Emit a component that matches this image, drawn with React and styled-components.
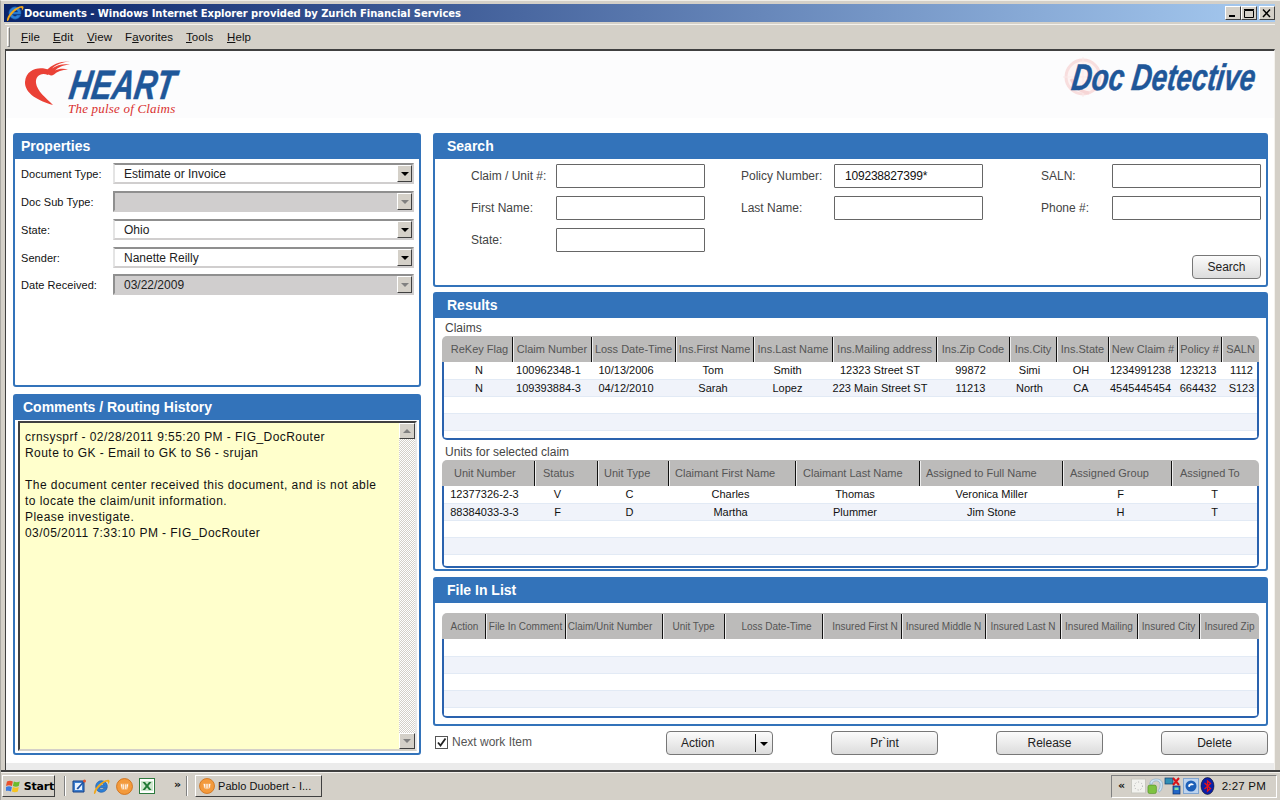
import React from "react";
import styled, { createGlobalStyle } from "styled-components";

const Global = createGlobalStyle`
  html, body { margin: 0; padding: 0; width: 1280px; height: 800px; overflow: hidden; }
  body { font-family: "Liberation Sans", Arial, sans-serif; background: #d4d0c8; }
  * { box-sizing: border-box; }
`;

const Win = styled.div`
  width: 1280px; height: 800px; display: flex; flex-direction: column; background: #d4d0c8;
  border-top: 1px solid #f0eee8; border-left: 1px solid #aaa8a2;
`;
const TitleBar = styled.div`
  height: 18px; flex: none; margin: 3px 5px 0 3px; display: flex; align-items: center; padding-left: 2px;
  background: linear-gradient(90deg, #0a246a 0%, #a6caf0 100%);
`;
const TitleText = styled.div`
  flex: 1; color: #fff; font: bold 10px "DejaVu Sans", sans-serif; letter-spacing: -.05px; white-space: nowrap;
`;
const WinButtons = styled.div`display: flex;`;
const WinBtn = styled.div`
  width: 16px; height: 14px; margin-left: ${p => p.$ml || 0}px; background: #d4d0c8;
  border: 1px solid; border-color: #fff #404040 #404040 #fff;
  display: flex; align-items: center; justify-content: center;
`;
const MenuBar = styled.div`
  height: 24px; flex: none; margin: 2px 5px 0 4px; display: flex; align-items: center; padding-left: 2px;
  border-top: 1px solid #f4f2ee; color: #111;
`;
const Grip = styled.div`width: 3px; height: 20px; border: 1px solid; border-color: #fff #808080 #808080 #fff; margin-right: 11px;`;
const MenuItem = styled.span`
  width: ${p => p.$w}px; font: 11.5px "Liberation Sans", sans-serif; letter-spacing: .1px;
  u { text-decoration: underline; }
`;
const Content = styled.div`
  height: 721px; flex: none; margin: 1px 5px 0 4px; display: flex; flex-direction: column; background: #fff;
  border-top: 2px solid #404040; border-left: 1px solid #404040; border-right: 1px solid #f4f2ee;
`;
const Brand = styled.div`
  height: 67px; flex: none; background: #fcfcfd; display: flex; justify-content: space-between; overflow: hidden;
`;
const HeartLogo = styled.div`
  display: flex; align-items: flex-start; padding: 9px 0 0 18px; position: relative;
`;
const HeartWords = styled.div`display: flex; flex-direction: column; margin-left: -2px;`;
const HeartName = styled.div`
  font: italic bold 41px/33px "Liberation Sans", sans-serif; color: #1f5799; margin-top: 9px;
  -webkit-text-stroke: .5px #1f5799;
  transform: scaleX(.75) skewX(-12deg); transform-origin: 0 50%; white-space: nowrap;
`;
const Tagline = styled.div`
  font: italic 13px/14px "Liberation Serif", serif; color: #d9302f; margin-left: -2px; margin-top: 0; letter-spacing: .2px; white-space: nowrap;
`;
const DocLogo = styled.div`display: flex; align-items: flex-start; position: relative; width: 215px; padding-top: 9px;`;
const DocMark = styled.svg`position: absolute; left: 4px; top: 6px; opacity: .75;`;
const DocName = styled.div`
  position: relative; margin-left: 13px; font: italic bold 37px/36px "Liberation Sans", sans-serif; color: #1f5799;
  -webkit-text-stroke: .5px #1f5799;
  transform: scaleX(.75) skewX(-10deg); transform-origin: 0 50%; white-space: nowrap;
`;
const Main = styled.div`
  flex: 1; display: flex; gap: 12px; padding: 15px 6px 0 7px;
`;
const Col = styled.div`display: flex; flex-direction: column; width: ${p => p.$w}px;`;
const Panel = styled.section`
  height: ${p => p.$h}px; margin-bottom: ${p => p.$mb || 0}px; border: 2px solid #3373ba; border-radius: 3px; display: flex; flex-direction: column; flex: none;
`;
const PanelHead = styled.h2`
  margin: 0; height: 24px; flex: none; background: #3373ba; color: #fff;
  font: bold 14px/22px "Liberation Sans", sans-serif; padding-left: ${p => p.$pl || 12}px;
`;
const PropBody = styled.div`padding: 4px 5px 0 6px; display: flex; flex-direction: column;`;
const PropRow = styled.div`display: flex; align-items: center; margin-top: ${p => p.$mt}px; height: 21px;`;
const PropLabel = styled.label`width: 92px; font-size: 11px; color: #111; letter-spacing: .05px;`;
const Select = styled.div`
  flex: 1; height: 21px; position: relative; display: flex; align-items: center; padding-left: 9px; font-size: 12px; color: #222;
  background: ${p => p.$off ? "#d0cece" : "#fff"};
  border: 2px solid; border-color: #8f8f8f #d0cece #d0cece ${p => p.$off ? "#8f8f8f" : "#e4e4e4"};
`;
const Drop = styled.div`
  position: absolute; right: 0; top: 0; bottom: 0; width: 15px; background: #d4d0c8;
  border: 1px solid; border-color: #fff #404040 #404040 #fff; display: flex; align-items: center; justify-content: center;
  &::after { content: ""; border: 4px solid transparent; border-top: 4px solid ${p => p.$off ? "#808080" : "#000"}; border-bottom: 0; }
`;
const CommentWrap = styled.div`flex: 1; padding: 1px 2px 2px 3px; display: flex; min-height: 0;`;
const CommentBox = styled.div`
  flex: 1; display: flex; background: #ffc; border: 2px solid; border-color: #404040 #e8e8e8 #d4d0c8 #404040; min-height: 0;
`;
const CommentText = styled.div`
  flex: 1; padding: 6px 0 0 5px; font: 12px/16px "Liberation Sans", sans-serif; color: #111; letter-spacing: .45px; white-space: pre;
`;
const Scroll = styled.div`
  width: 16px; display: flex; flex-direction: column; justify-content: space-between;
  background: conic-gradient(#d4d0c8 25%, #fff 0 50%, #d4d0c8 0 75%, #fff 0) 0 0 / 2px 2px;
`;
const ScrollBtn = styled.div`
  width: 16px; height: 16px; background: #d4d0c8; border: 1px solid; border-color: #fff #404040 #404040 #fff;
  display: flex; align-items: center; justify-content: center;
  &::after { content: ""; border: 4px solid transparent; ${p => p.$up ? "border-bottom: 4px solid #808080; border-top: 0;" : "border-top: 4px solid #808080; border-bottom: 0;"} }
`;
const SearchGrid = styled.div`
  display: grid; grid-template-columns: 270px 300px 220px; grid-auto-rows: 24px; row-gap: 8px; padding: 5px 0 0 36px;
`;
const Field = styled.div`display: flex; align-items: center; grid-column: ${p => p.$col}; grid-row: ${p => p.$row};`;
const FieldLabel = styled.label`width: ${p => p.$w}px; font-size: 12px; color: #444; margin-top: ${p => p.$dy || 0}px;`;
const TextInput = styled.input`
  width: 149px; height: 24px; padding: 0 10px; border: 1px solid #666; border-radius: 1px; background: #fff; font: 12px "Liberation Sans", sans-serif; letter-spacing: -.2px; color: #111; outline: none;
`;
const SearchFoot = styled.div`display: flex; justify-content: flex-end; padding: 3px 5px 0 0;`;
const Btn = styled.div`
  width: ${p => p.$w}px; height: 24px; border: 1px solid #777; border-radius: 4px; display: flex; align-items: center; justify-content: center;
  background: linear-gradient(#fbfbfb, #dcdcdc); font-size: 12px; color: #222;
`;
const ResultsBody = styled.div`padding: 0 7px;`;
const Caption = styled.div`height: ${p => p.$h}px; padding-top: ${p => p.$pt}px; padding-left: 3px; font-size: 12px; line-height: 14px; color: #444;`;
const Table = styled.div`
  border-radius: 5px; overflow: hidden; display: flex; flex-direction: column; height: ${p => p.$h}px; background: #fff;
  border-bottom: 2px solid #2a62ae;
`;
const HeadRow = styled.div`
  height: 26px; flex: none; display: grid; grid-template-columns: ${p => p.$cols}; background: #bcbbba;
`;
const HeadCell = styled.div`
  display: flex; align-items: center; white-space: nowrap; overflow: hidden; padding-bottom: 1px;
  justify-content: ${p => p.$left ? "flex-start" : "center"}; padding-left: ${p => p.$pl || 0}px; padding-right: ${p => p.$pr || 0}px;
  font-size: ${p => p.$fs}px; color: #555;
  border-right: ${p => p.$last ? "none" : "1px solid #111"}; box-shadow: ${p => p.$last ? "none" : "1px 0 0 #eee"};
  margin: 1px 0 0 0;
`;
const TableBody = styled.div`
  flex: 1; display: flex; flex-direction: column; position: relative; min-height: 0;
  &::after { content: ""; position: absolute; inset: 0; border-left: 2px solid #2a62ae; border-right: 2px solid #2a62ae; pointer-events: none; }
`;
const Row = styled.div`
  height: 17px; flex: none; display: grid; grid-template-columns: ${p => p.$cols};
  background: ${p => p.$alt ? "#f0f3fa" : "#fff"}; border-bottom: 1px solid #e2eaf5;
  &:first-child { height: 18px; }
`;
const Cell = styled.div`
  font-size: 11px; line-height: 16px; color: #111; text-align: center; white-space: nowrap; position: relative; left: ${p => p.$shift}px;
`;
const FileBody = styled.div`padding: 10px 7px 0;`;
const ActionBar = styled.div`display: flex; align-items: flex-start; padding-top: 5px;`;
const Check = styled.div`
  display: flex; align-items: center; gap: 4px; width: 233px; padding: 4px 0 0 2px; font-size: 12px; color: #555;
`;
const CheckBox = styled.div`
  width: 13px; height: 13px; border: 1px solid #555; background: #fff; display: flex; align-items: center; justify-content: center;
`;
const BtnRow = styled.div`display: flex; gap: 58px;`;
const ActionBtn = styled(Btn)`position: relative; justify-content: flex-start; padding-left: 14px;`;
const Split = styled.div`
  position: absolute; right: 0; top: 2px; bottom: 2px; width: 17px; border-left: 1px solid #111; display: flex; align-items: center; justify-content: center;
  &::after { content: ""; border: 4px solid transparent; border-top: 4px solid #000; border-bottom: 0; margin-top: 2px; }
`;
const Footer = styled.div`height: 7px; flex: none; margin-top: auto; background: #ebebeb;`;
const Task = styled.div`
  flex: 1; display: flex; align-items: center; padding: 0 3px 0 1px; border-top: 2px solid #404040; box-shadow: inset 0 1px 0 #f4f2ee; color: #111;
`;
const StartBtn = styled.div`
  width: 53px; height: 22px; display: flex; align-items: center; gap: 2px; padding-left: 3px; background: #d4d0c8;
  border: 1px solid; border-color: #fff #404040 #404040 #fff; font: bold 11px "DejaVu Sans", sans-serif; letter-spacing: -.2px; color: #000;
`;
const Sep = styled.div`width: 2px; height: 20px; margin: ${p => p.$m}; border-left: 1px solid #808080; border-right: 1px solid #fff;`;
const Quick = styled.div`display: flex; align-items: center; gap: 6px;`;
const More = styled.div`width: 16px; margin-left: 19px; font: bold 11px "DejaVu Sans", sans-serif; margin-top: -4px;`;
const TaskBtn = styled.div`
  width: 127px; height: 22px; margin-left: 2px; display: flex; align-items: center; gap: 3px; padding-left: 3px; background: #d4d0c8; white-space: nowrap;
  border: 1px solid; border-color: #fff #404040 #404040 #fff; font: 11px "Liberation Sans", sans-serif; letter-spacing: .05px; color: #111;
`;
const Tray = styled.div`
  margin-left: auto; width: 166px; height: 23px; display: flex; align-items: center; padding-left: 6px; border: 1px solid; border-color: #808080 #fff #fff #808080; gap: 1px;
`;
const TrayMore = styled.span`font: bold 11px "DejaVu Sans", sans-serif; width: 12px; margin-top: -2px;`;
const Clock = styled.span`margin-left: auto; margin-right: 10px; font: 11.5px "Liberation Sans", sans-serif; letter-spacing: .2px; white-space: nowrap;`;

const claimCols = [
  ["ReKey Flag", 71, 1.5, 5], ["Claim Number", 79, -4], ["Loss Date-Time", 84, -8], ["Ins.First Name", 78, -2],
  ["Ins.Last Name", 79, -6], ["Ins.Mailing address", 104, -5], ["Ins.Zip Code", 73, -3], ["Ins.City", 47, -4],
  ["Ins.State", 52, -2], ["New Claim #", 69, -3], ["Policy #", 44, -2], ["SALN", 37, 1],
];
const claimRows = [
  ["N", "100962348-1", "10/13/2006", "Tom", "Smith", "12323 Street ST", "99872", "Simi", "OH", "1234991238", "123213", "1112"],
  ["N", "109393884-3", "04/12/2010", "Sarah", "Lopez", "223 Main Street ST", "11213", "North", "CA", "4545445454", "664432", "S123"],
];
const unitCols = [
  ["Unit Number", 93, -4, 12], ["Status", 63, -9, 8], ["Unit Type", 71, -4, 6], ["Claimant First Name", 127, -2, 6],
  ["Claimant Last Name", 124, -3, 7], ["Assigned to Full Name", 143, 0, 6], ["Assigned Group", 109, 3, 7], ["Assigned To", 87, -1, 8],
];
const unitRows = [
  ["12377326-2-3", "V", "C", "Charles", "Thomas", "Veronica Miller", "F", "T"],
  ["88384033-3-3", "F", "D", "Martha", "Plummer", "Jim Stone", "H", "T"],
];
const fileCols = [
  ["Action", 44, 0, 2], ["File In Comment", 80], ["Claim/Unit Number", 97, 0, 0, 8], ["Unit Type", 62], ["Loss Date-Time", 98, 0, 6],
  ["Insured First N", 79, 0, 6], ["Insured Middle N", 84], ["Insured Last N", 75], ["Insured Mailing", 77], ["Insured City", 62], ["Insured Zip", 59],
];

function DataTable({ cols, rows, height, left, fs = 11 }) {
  const tpl = cols.map(c => c[1] + "px").join(" ");
  const blanks = 4 - rows.length;
  return (
    <Table $h={height}>
      <HeadRow $cols={tpl}>
        {cols.map((c, i) => (
          <HeadCell key={c[0]} $left={left} $pl={c[3]} $pr={c[4]} $fs={fs} $last={i === cols.length - 1}>{c[0]}</HeadCell>
        ))}
      </HeadRow>
      <TableBody>
        {rows.map((r, i) => (
          <Row key={i} $cols={tpl} $alt={i % 2 === 1}>
            {r.map((t, j) => <Cell key={j} $shift={cols[j][2]}>{t}</Cell>)}
          </Row>
        ))}
        {Array.from({ length: blanks }, (_, i) => <Row key={"b" + i} $cols={tpl} $alt={(rows.length + i) % 2 === 1} />)}
      </TableBody>
    </Table>
  );
}

const IEIcon = ({ size = 16 }) => (
  <svg width={size} height={size} viewBox="0 0 16 16">
    <path d="M8 2.500a5.500 5.500 0 1 0 5.200 7.300h-3.300a2.400 2.400 0 0 1-4.200-.6h7.700A5.500 5.500 0 0 0 8 2.500zM5.600 7a2.500 2.500 0 0 1 4.800 0z" fill="#2c7fd6" stroke="#10509f" strokeWidth=".5" />
    <path d="M1 15c-1-2 3-9 8-11.500 3-1.500 6-2.500 6.500-1 .4 1-.5 2.500-1.500 3.500.3-1.500.3-2.500-.7-2.700C11 3.300 3.500 9.500 2.500 14c-.5.800-1.200 1.300-1.500 1z" fill="#f0a81c" />
  </svg>
);
const OrangeIcon = ({ size = 16 }) => (
  <svg width={size} height={size} viewBox="0 0 16 16">
    <circle cx="8" cy="8" r="7.500" fill="#f39a3c" stroke="#cf6e17" strokeWidth=".8" />
    <path d="M4 5.500h8L11 10c-.5 1.500-5.500 1.500-6 0zM6.400 5.500v5M8 5.500v5.500M9.600 5.500v5" fill="#fff" stroke="#f39a3c" strokeWidth=".7" />
  </svg>
);
const NoteIcon = () => (
  <svg width="16" height="16" viewBox="0 0 16 16">
    <path d="M2 3h11v11H2z" fill="#3d7fd0" stroke="#123f85" />
    <path d="M4 5h7v7H4z" fill="#e8f2ff" />
    <path d="M5.500 10.500 12 3.500l2-1.500-1 2.500-6 7z" fill="#1c4f9e" />
    <circle cx="13.500" cy="3" r="1.500" fill="#e5572d" />
  </svg>
);
const ExcelIcon = () => (
  <svg width="16" height="16" viewBox="0 0 16 16">
    <rect x=".5" y=".5" width="15" height="15" fill="#fff" stroke="#2d7a3e" />
    <path d="M2 3h12v10H2z" fill="#cfe7cf" />
    <path d="M3.500 4 6 4l2 2.500L10 4l2.500 0L9.300 8l3.200 4H10L8 9.500 6 12H3.500l3.200-4z" fill="#237a37" />
  </svg>
);
const FlagIcon = () => (
  <svg width="16" height="16" viewBox="0 0 16 16">
    <path d="M1 3.500c2-1 4-1 6 0L6 8C4 7 2 7 0 8z" fill="#e8502c" />
    <path d="M8 3.500c2 1 4 1 6 0l-1 4.500c-2 1-4 1-6 0z" fill="#6cbb2c" />
    <path d="M0 9c2-1 4-1 6 0l-1 4.500c-2-1-4-1-6 0z" fill="#3b7be0" />
    <path d="M7 9c2 1 4 1 6 0l-1 4.500c-2 1-4 1-6 0z" fill="#f6c420" />
  </svg>
);
const TrayIcons = () => (
  <>
    <svg width="15" height="16" viewBox="0 0 15 16">
      <rect x=".5" y="1" width="14" height="14" fill="#f2f2ee" stroke="#c8c8c0" />
      <circle cx="7.500" cy="8" r="4" fill="none" stroke="#aaa" strokeDasharray="1 2" />
    </svg>
    <svg width="16" height="17" viewBox="0 0 17 17">
      <path d="M3 6c0-4 3-5.500 7-5.500s6.500 2 6.500 6-1.500 7-3.500 8l-1-2c1.500-1.500 2-4 2-6 0-2.500-2-4-4-4S6 3 5.500 6z" fill="#cfe3f2" stroke="#7aa6c6" strokeWidth=".6" />
      <rect x="1" y="7" width="9" height="9" rx="2" fill="#7ec241" stroke="#4a8a1f" strokeWidth=".6" />
    </svg>
    <svg width="18" height="18" viewBox="0 0 18 18">
      <rect x="1" y="1" width="8" height="6" fill="#2f8fb5" stroke="#123a6a" strokeWidth=".7" />
      <rect x="9" y="9" width="7" height="8" fill="#2367c6" stroke="#0b2f6c" strokeWidth=".7" />
      <rect x="10.500" y="10.500" width="4" height="2.500" fill="#7fe0a0" />
      <path d="M9 1l6 7M15 1 9 8" stroke="#d8141a" strokeWidth="2" />
    </svg>
    <svg width="16" height="16" viewBox="0 0 16 16">
      <rect x=".5" y=".5" width="15" height="15" fill="#bcd3ee" stroke="#7fa4d0" />
      <circle cx="8" cy="8" r="5.500" fill="#1d5fb8" />
      <path d="M5 8.500a3.200 3.200 0 0 1 6-1.500l-2 .3A1.500 1.500 0 0 0 7 9z" fill="#fff" />
    </svg>
    <svg width="15" height="18" viewBox="0 0 15 18">
      <ellipse cx="7.500" cy="9" rx="6.500" ry="8.500" fill="#0a1fa8" stroke="#000" strokeWidth=".5" />
      <path d="M4.500 6l6 5.500L7.500 14V4l3 2.500-6 5.500" fill="none" stroke="#e8141a" strokeWidth="1.300" />
    </svg>
  </>
);

export default function App() {
  return (
    <Win>
      <Global />
      <TitleBar>
        <IEIcon size={18} />
        <TitleText>Documents - Windows Internet Explorer provided by Zurich Financial Services</TitleText>
        <WinButtons>
          <WinBtn><svg width="10" height="9" viewBox="0 0 10 9"><rect x="1" y="6" width="6" height="2" /></svg></WinBtn>
          <WinBtn><svg width="10" height="9" viewBox="0 0 10 9"><path d="M.5 1.500h9v7h-9zM0 .5h10" fill="none" stroke="#000" /></svg></WinBtn>
          <WinBtn $ml={2}><svg width="10" height="9" viewBox="0 0 10 9"><path d="M1 .5l7 7.500M8 .5 1 8" stroke="#000" strokeWidth="1.500" /></svg></WinBtn>
        </WinButtons>
      </TitleBar>
      <MenuBar>
        <Grip />
        <MenuItem $w={32}><u>F</u>ile</MenuItem>
        <MenuItem $w={34}><u>E</u>dit</MenuItem>
        <MenuItem $w={38}><u>V</u>iew</MenuItem>
        <MenuItem $w={61}>F<u>a</u>vorites</MenuItem>
        <MenuItem $w={41}><u>T</u>ools</MenuItem>
        <MenuItem $w={30}><u>H</u>elp</MenuItem>
      </MenuBar>
      <Content>
        <Brand>
          <HeartLogo>
            <svg width="48" height="47" viewBox="0 0 48 47">
              <path d="M2 16c-1 5 3 15 8 20" fill="none" stroke="#eee" strokeWidth=".8" />
              <path d="M25 10C17 6 2 8 1 22c-.5 11 13 19 28 23C22 38 13 31 12 23c-.7-7 5-11 12-8 3-3 5-4 1-5z" fill="#ea4136" />
              <path d="M22 11c6-7 15-10 24-9.500-8 .5-14 3-18 7 5-4 12-5 18-4-7 .5-12 3-15 6 4-2 9-2 13-1-6 .5-11 2-14 5-3 2-5 1-8-3.500z" fill="#ea4136" />
            </svg>
            <HeartWords>
              <HeartName>HEART</HeartName>
              <Tagline>The pulse of Claims</Tagline>
            </HeartWords>
          </HeartLogo>
          <DocLogo>
            <DocMark width="40" height="40" viewBox="0 0 40 40">
              <circle cx="20" cy="20" r="17" fill="#fdf0f0" stroke="#f7d4d4" strokeWidth="3" />
              <path d="M20 0v40M0 20h40" stroke="#fbe4e4" strokeWidth="1" />
              <path d="M8 22c4 8 8 12 18 14" fill="none" stroke="#f5c8c8" strokeWidth="3" />
            </DocMark>
            <DocName>Doc Detective</DocName>
          </DocLogo>
        </Brand>
        <Main>
          <Col $w={408}>
            <Panel $h={254} $mb={7}>
              <PanelHead $pl={6}>Properties</PanelHead>
              <PropBody>
                <PropRow $mt={0}><PropLabel>Document Type:</PropLabel><Select>Estimate or Invoice<Drop /></Select></PropRow>
                <PropRow $mt={7}><PropLabel>Doc Sub Type:</PropLabel><Select $off><Drop $off /></Select></PropRow>
                <PropRow $mt={7}><PropLabel>State:</PropLabel><Select>Ohio<Drop /></Select></PropRow>
                <PropRow $mt={7}><PropLabel>Sender:</PropLabel><Select>Nanette Reilly<Drop /></Select></PropRow>
                <PropRow $mt={6}><PropLabel>Date Received:</PropLabel><Select $off>03/22/2009<Drop $off /></Select></PropRow>
              </PropBody>
            </Panel>
            <Panel $h={361}>
              <PanelHead $pl={8}>Comments / Routing History</PanelHead>
              <CommentWrap>
                <CommentBox>
                  <CommentText>{`crnsysprf - 02/28/2011 9:55:20 PM - FIG_DocRouter
Route to GK - Email to GK to S6 - srujan

The document center received this document, and is not able
to locate the claim/unit information.
Please investigate.
03/05/2011 7:33:10 PM - FIG_DocRouter`}</CommentText>
                  <Scroll><ScrollBtn $up /><ScrollBtn /></Scroll>
                </CommentBox>
              </CommentWrap>
            </Panel>
          </Col>
          <Col $w={835}>
            <Panel $h={154} $mb={5}>
              <PanelHead>Search</PanelHead>
              <SearchGrid>
                <Field $col={1} $row={1}><FieldLabel $w={85}>Claim / Unit #:</FieldLabel><TextInput readOnly /></Field>
                <Field $col={2} $row={1}><FieldLabel $w={93} $dy={-1}>Policy Number:</FieldLabel><TextInput readOnly value="109238827399*" /></Field>
                <Field $col={3} $row={1}><FieldLabel $w={71}>SALN:</FieldLabel><TextInput readOnly /></Field>
                <Field $col={1} $row={2}><FieldLabel $w={85}>First Name:</FieldLabel><TextInput readOnly /></Field>
                <Field $col={2} $row={2}><FieldLabel $w={93} $dy={-1}>Last Name:</FieldLabel><TextInput readOnly /></Field>
                <Field $col={3} $row={2}><FieldLabel $w={71}>Phone #:</FieldLabel><TextInput readOnly /></Field>
                <Field $col={1} $row={3}><FieldLabel $w={85}>State:</FieldLabel><TextInput readOnly /></Field>
              </SearchGrid>
              <SearchFoot><Btn $w={69}>Search</Btn></SearchFoot>
            </Panel>
            <Panel $h={279} $mb={6}>
              <PanelHead>Results</PanelHead>
              <ResultsBody>
                <Caption $h={18} $pt={3}>Claims</Caption>
                <DataTable cols={claimCols} rows={claimRows} height={104} />
                <Caption $h={20} $pt={5}>Units for selected claim</Caption>
                <DataTable cols={unitCols} rows={unitRows} height={108} left />
              </ResultsBody>
            </Panel>
            <Panel $h={149}>
              <PanelHead>File In List</PanelHead>
              <FileBody>
                <DataTable cols={fileCols} rows={[]} height={105} fs={10} />
              </FileBody>
            </Panel>
            <ActionBar>
              <Check>
                <CheckBox><svg width="11" height="11" viewBox="0 0 11 11"><path d="M2 5.500l2.500 3L9.500 1.500" fill="none" stroke="#222" strokeWidth="1.800" /></svg></CheckBox>
                Next work Item
              </Check>
              <BtnRow>
                <ActionBtn $w={107}>Action<Split /></ActionBtn>
                <Btn $w={107}>Pr`int</Btn>
                <Btn $w={107}>Release</Btn>
                <Btn $w={107}>Delete</Btn>
              </BtnRow>
            </ActionBar>
          </Col>
        </Main>
        <Footer />
      </Content>
      <Task>
        <StartBtn><FlagIcon />Start</StartBtn>
        <Sep $m="0 5px 0 9px" />
        <Quick>
          <NoteIcon /><IEIcon size={17} /><OrangeIcon size={17} /><ExcelIcon />
        </Quick>
        <More>»</More>
        <Sep $m="0 5px 0 -4px" />
        <TaskBtn><OrangeIcon />Pablo Duobert - I...</TaskBtn>
        <Tray>
          <TrayMore>«</TrayMore>
          <TrayIcons />
          <Clock>2:27 PM</Clock>
        </Tray>
      </Task>
    </Win>
  );
}
